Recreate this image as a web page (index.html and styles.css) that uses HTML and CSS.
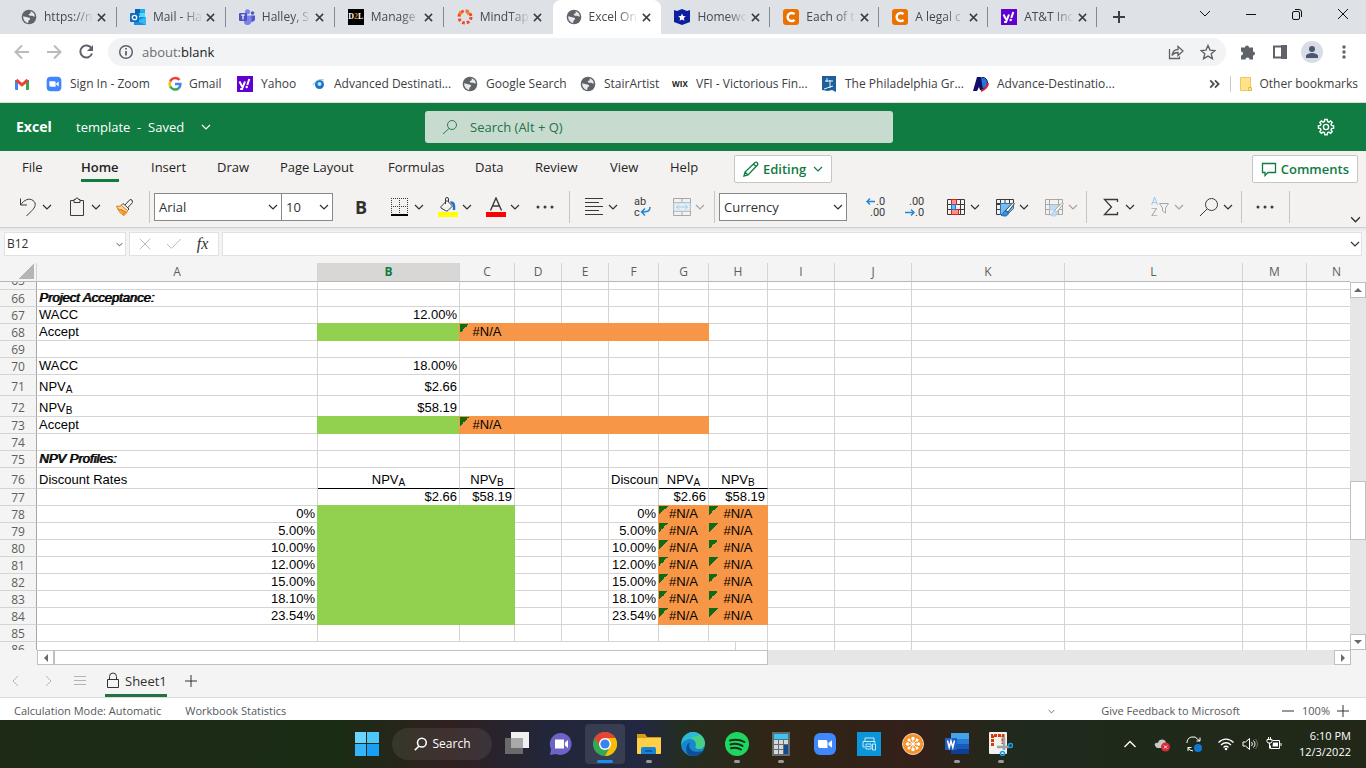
FILE: index.html
```html
<!DOCTYPE html>
<html lang="en">
<head>
<meta charset="utf-8">
<title>Excel Online</title>
<link rel="stylesheet" href="styles.css">
</head>
<body>
<svg class="defs" aria-hidden="true">
  <symbol id="chev" viewBox="0 0 10 10"><path d="M1 3l4 4 4-4" fill="none" stroke="currentColor" stroke-width="1.2"/></symbol>
  <symbol id="x" viewBox="0 0 10 10"><path d="M1 1l8 8M9 1l-8 8" fill="none" stroke="currentColor" stroke-width="1.7"/></symbol>
  <symbol id="globe" viewBox="0 0 16 16"><circle cx="8" cy="8" r="7.3" fill="#5f6368"/><path d="M9.500 2.300c2.300.5 4.200 2.500 4.300 5.200-1.200.4-1.600-.6-2.600-.7-1.300-.1-2.600.2-3.300-.8-.5-1 .4-1.400 1.400-1.500.8-.2.3-1.400.2-2.200zM2.200 7.200l4 1.100c1.200.4 2.900.3 2.900 1.600 0 1-1.600 1-1.700 2.100l-.2 1.900C4.200 13.500 1.900 10.500 2.200 7.200z" fill="#e8eaed"/></symbol>
  <symbol id="yahoo" viewBox="0 0 16 16"><path fill="#6001d2" d="M0 0h16v16H0z"/><path d="M2.500 5.500l2.600 5M8 5.500L5 13H3.200M12.300 3L10.300 9" fill="none" stroke="#fff" stroke-width="2"/><circle cx="9.700" cy="11" r="1.200" fill="#fff"/></symbol>
  <symbol id="chegg" viewBox="0 0 16 16"><rect width="16" height="16" rx="3" fill="#eb7100"/><path d="M11.500 5.200A4 4 0 1 0 11.500 10.800" fill="none" stroke="#fff" stroke-width="2.400"/></symbol>
  <symbol id="camera" viewBox="0 0 24 24"><rect x="1" y="1" width="22" height="22" rx="6" fill="#4087fc"/><path d="M5 8h7.500a2 2 0 0 1 2 2v6H7a2 2 0 0 1-2-2zM15.500 11l3.500-2.800v7.600L15.500 13z" fill="#fff"/></symbol>
</svg>

<header class="tabstrip">
  <nav class="tabs" aria-label="Browser tabs">
    <div class="tab"><svg class="i16"><use href="#globe"/></svg><span class="title">https://n</span><button class="close" aria-label="Close tab"><svg><use href="#x"/></svg></button></div>
    <div class="tab"><svg class="i16" viewBox="0 0 16 16"><path fill="#28a8ea" d="M5 0h10v7H5z"/><path fill="#0364b8" d="M5 0h5v4H5z"/><path fill="#50d9ff" d="M10 4h5v4h-5z"/><path fill="#1490df" d="M4 8h12v8H4z"/><path fill="#35b8f1" d="M16 8v8l-9-4z"/><rect y="4" width="9" height="9" rx="1" fill="#0f6cbd"/><circle cx="4.500" cy="8.500" r="2.200" fill="none" stroke="#fff" stroke-width="1.300"/></svg><span class="title">Mail - Ha</span><button class="close" aria-label="Close tab"><svg><use href="#x"/></svg></button></div>
    <div class="tab"><svg class="i16" viewBox="0 0 16 16"><circle cx="13.500" cy="4" r="1.800" fill="#5059c9"/><circle cx="8.500" cy="2.800" r="2.500" fill="#7b83eb"/><path fill="#5059c9" d="M12 6.500h4v4a3 3 0 0 1-4 2z"/><path fill="#7b83eb" d="M5 6.500h7.500V12a4 4 0 0 1-7.500 2z"/><rect y="4" width="8" height="8" rx="1" fill="#4b53bc"/><path d="M2 6h4M4 6v4.500" stroke="#fff" stroke-width="1.200"/></svg><span class="title">Halley, S</span><button class="close" aria-label="Close tab"><svg><use href="#x"/></svg></button></div>
    <div class="tab"><span class="d2l">D<b>2</b>L</span><span class="title">Manage</span><button class="close" aria-label="Close tab"><svg><use href="#x"/></svg></button></div>
    <div class="tab"><svg class="i16" viewBox="0 0 16 16" fill="none" stroke-width="3"><circle cx="8" cy="8" r="6" stroke="#e94b2b" stroke-dasharray="2.700 2"/><path d="M10 1.500l2 4M2 3l3 2" stroke="#f58220"/></svg><span class="title">MindTap</span><button class="close" aria-label="Close tab"><svg><use href="#x"/></svg></button></div>
    <div class="tab active"><svg class="i16"><use href="#globe"/></svg><span class="title">Excel On</span><button class="close" aria-label="Close tab"><svg><use href="#x"/></svg></button></div>
    <div class="tab"><svg class="i16" viewBox="0 0 16 16"><path fill="#0b1fa0" d="M0 1l3 1 5-2 5 2 3-1v12l-8 3-8-3z"/><path fill="#fff" d="M8 4.500l1.100 2.500 2.700.3-2 1.800.6 2.700L8 10.400l-2.400 1.400.6-2.700-2-1.800L6.900 7z"/></svg><span class="title">Homewo</span><button class="close" aria-label="Close tab"><svg><use href="#x"/></svg></button></div>
    <div class="tab"><svg class="i16"><use href="#chegg"/></svg><span class="title">Each of t</span><button class="close" aria-label="Close tab"><svg><use href="#x"/></svg></button></div>
    <div class="tab"><svg class="i16"><use href="#chegg"/></svg><span class="title">A legal c</span><button class="close" aria-label="Close tab"><svg><use href="#x"/></svg></button></div>
    <div class="tab"><svg class="i16"><use href="#yahoo"/></svg><span class="title">AT&amp;T Inc</span><button class="close" aria-label="Close tab"><svg><use href="#x"/></svg></button></div>
  </nav>
  <button class="newtab" aria-label="New tab"><svg viewBox="0 0 12 12"><path d="M6 0v12M0 6h12" stroke="#3c4043" stroke-width="2"/></svg></button>
  <div class="winctl">
    <button aria-label="Search tabs"><svg viewBox="0 0 12 12"><path d="M1 3l5 5 5-5"/></svg></button>
    <button aria-label="Minimize"><svg viewBox="0 0 12 12"><path d="M1 6.500h10"/></svg></button>
    <button aria-label="Restore"><svg viewBox="0 0 12 12"><rect x="1.500" y="3.500" width="7" height="8" rx="1.500"/><path d="M4 1.500h4a2.500 2.500 0 0 1 2.500 2.500v5"/></svg></button>
    <button aria-label="Close"><svg viewBox="0 0 12 12"><path d="M1 1l10 10M11 1L1 11"/></svg></button>
  </div>
</header>

<div class="toolbar">
  <button class="tb off" aria-label="Back"><svg viewBox="0 0 16 16"><path d="M15 8H2M8 1.500L1.500 8 8 14.500"/></svg></button>
  <button class="tb off" aria-label="Forward"><svg viewBox="0 0 16 16"><path d="M1 8h13M8 1.500L14.500 8 8 14.500"/></svg></button>
  <button class="tb" aria-label="Reload"><svg viewBox="0 0 16 16"><path d="M13.500 4.500A6 6 0 1 0 14 9.500" stroke-width="2"/><path d="M15 1v6H9z" fill="#5f6368" stroke="none"/></svg></button>
  <div class="omnibox">
    <svg class="i16" viewBox="0 0 16 16" fill="none" stroke="#5f6368" stroke-width="1.500"><circle cx="8" cy="8" r="6.300"/><path d="M8 7v4.500M8 4v1.600" stroke-width="1.800"/></svg>
    <span class="url" role="textbox" aria-label="Address"><i>about:</i>blank</span>
    <button class="tb" aria-label="Share"><svg viewBox="0 0 16 16"><path d="M1.500 5v9.500h10v-2M4 11.500c.5-4 2.500-6 6-6V2.500L15 7l-5 4.500V8.500c-3 0-4.500.7-6 3z" stroke-width="1.300"/></svg></button>
    <button class="tb" aria-label="Bookmark"><svg viewBox="0 0 16 16"><path d="M8 1.500l2 4.600 5 .4-3.800 3.300 1.200 4.900L8 12.100l-4.400 2.600 1.200-4.900L1 6.500l5-.4z" stroke-width="1.400"/></svg></button>
  </div>
  <button class="tb" aria-label="Extensions"><svg viewBox="0 0 16 16"><path fill="#5f6368" stroke="none" d="M1 3.500h4a2 2 0 1 1 4 0h4v4a2 2 0 1 1 0 4v4H9.500a2 2 0 1 0-4 0H1v-4a2 2 0 1 0 0-4z"/></svg></button>
  <button class="tb" aria-label="Side panel"><svg viewBox="0 0 16 16"><path d="M2 2.500h12v11H2z"/><path d="M10 2h4v12h-4z" fill="#5f6368"/></svg></button>
  <button class="tb avatar" aria-label="Profile"><svg viewBox="0 0 22 22"><circle cx="11" cy="11" r="11" fill="#dadce5" stroke="none"/><circle cx="11" cy="8" r="3" fill="#4b5670" stroke="none"/><path d="M5 17v-2c0-2 4-3 6-3s6 1 6 3v2z" fill="#4b5670" stroke="none"/></svg></button>
  <button class="tb" aria-label="Menu"><svg viewBox="0 0 16 16" class="solid"><circle cx="8" cy="3" r="1.700"/><circle cx="8" cy="8" r="1.700"/><circle cx="8" cy="13" r="1.700"/></svg></button>
</div>

<nav class="bookmarks" aria-label="Bookmarks">
  <a href="#"><svg class="i16" viewBox="0 0 16 16"><path fill="#4285f4" d="M1 4h3v10H2a1 1 0 0 1-1-1z"/><path fill="#34a853" d="M12 4h3v9a1 1 0 0 1-1 1h-2z"/><path d="M2.300 4L8 8.800 13.700 4" fill="none" stroke="#ea4335" stroke-width="3"/></svg></a>
  <a href="#"><svg class="i16"><use href="#camera"/></svg>Sign In - Zoom</a>
  <a href="#"><svg class="i16" viewBox="0 0 16 16" fill="none" stroke-width="2.500"><path d="M12.500 4A5.500 5.500 0 0 0 3.200 5.500" stroke="#ea4335"/><path d="M3.200 5.500a5.500 5.500 0 0 0 0 5" stroke="#fbbc05"/><path d="M3.200 10.500a5.500 5.500 0 0 0 8.500 1.700" stroke="#34a853"/><path d="M8 8h5.400c0 2-.7 3.300-1.700 4.200" stroke="#4285f4"/></svg>Gmail</a>
  <a href="#"><svg class="i16"><use href="#yahoo"/></svg>Yahoo</a>
  <a href="#"><svg class="i16" viewBox="0 0 16 16"><circle cx="7.500" cy="8.500" r="4.500" fill="#1a73c4"/><path d="M1 9c3-5 7-6 11-5" stroke="#7cc0ea" fill="none"/><circle cx="7.500" cy="8" r="2" fill="#bfe6fb"/></svg>Advanced Destinati...</a>
  <a href="#"><svg class="i16"><use href="#globe"/></svg>Google Search</a>
  <a href="#"><svg class="i16"><use href="#globe"/></svg>StairArtist</a>
  <a href="#"><span class="wix">WIX</span>VFI - Victorious Fin...</a>
  <a href="#"><svg class="i16" viewBox="0 0 16 16"><path fill="#1c5f9b" d="M1 0h14v16l-4-2-4 1-6-1z"/><path d="M6 2v4M4 5h8M9 4v8M3 13l9-3" stroke="#e6f2fb" fill="none"/></svg>The Philadelphia Gr...</a>
  <a href="#"><svg class="i16" viewBox="0 0 16 16"><ellipse cx="10" cy="7" rx="4.500" ry="5.500" fill="#2478d8" stroke="#101068"/><path fill="#101068" d="M4 1h4l2 13H7l-1-3-2 4H0z"/><path d="M15 7c0 4-4 7-7 8" stroke="#e02030" stroke-width="2" fill="none"/></svg>Advance-Destinatio...</a>
  <button class="more" aria-label="More bookmarks"><svg viewBox="0 0 10 10"><path d="M1 2l3 3-3 3M5 2l3 3-3 3" fill="none" stroke="#4b4f54" stroke-width="1.500"/></svg></button>
  <a href="#" class="other"><svg class="i16" viewBox="0 0 16 16"><path fill="#ffe28a" stroke="#f0c75a" d="M2.500 1.500h10v13h-10z"/><path fill="#ffe28a" stroke="#e8b93f" d="M10.500 11.500h3v3h-3z"/></svg>Other bookmarks</a>
</nav>

<div class="appbar">
  <div class="doc"><strong>Excel</strong><button>template&nbsp; -&nbsp; Saved<svg class="chev"><use href="#chev"/></svg></button></div>
  <label class="search"><svg viewBox="0 0 16 16"><circle cx="10" cy="6" r="4.500"/><path d="M7 9.500L1 15"/></svg><input type="text" aria-label="Search" placeholder="Search (Alt + Q)"></label>
  <button class="gear" aria-label="Settings"><svg viewBox="0 0 18 18"><circle cx="9" cy="9" r="2.600"/><path d="M7.800 1.500h2.400l.4 2 1.300.6 1.700-1.200 1.600 1.600-1.200 1.700.6 1.300 2 .4v2.300l-2 .4-.6 1.400 1.200 1.700-1.600 1.600-1.700-1.200-1.300.6-.4 2H7.800l-.4-2-1.300-.6-1.700 1.200-1.600-1.600L4 12l-.6-1.400-2-.4V7.900l2-.4L4 6.200 2.800 4.500l1.600-1.600 1.700 1.200 1.300-.6z"/></svg></button>
</div>

<section class="ribbon">
  <div class="rtabs">
    <button>File</button><button class="on">Home</button><button>Insert</button><button>Draw</button><button>Page Layout</button><button>Formulas</button><button>Data</button><button>Review</button><button>View</button><button>Help</button>
    <button class="pill"><svg class="i16" viewBox="0 0 16 16"><path d="M1 15l1-4L12 1.500c1.500-1 3.500 1 2.500 2.500L5 14zM10.500 3L13 5.500M2 11l3 3"/></svg>Editing<svg class="chev"><use href="#chev"/></svg></button>
    <button class="pill comments"><svg class="i16" viewBox="0 0 16 16"><path d="M1.500 2.500h13v9H7L4 14.500v-3H1.500z"/></svg>Comments</button>
  </div>
  <div class="tools">
    <button class="t2" aria-label="Undo"><svg viewBox="0 0 20 20"><path d="M2.500 1.500v6.500h6.500M2.500 8C6 3 11 .5 15 3.500s2 7-1 10L8.500 19"/></svg><svg class="chev"><use href="#chev"/></svg></button>
    <button class="t2" aria-label="Paste"><svg viewBox="0 0 20 20"><path d="M7 3.500H3.500v15h13v-15H13M7 5.500v-3h1.500a1.500 1.500 0 0 1 3 0H13v3z"/></svg><svg class="chev"><use href="#chev"/></svg></button>
    <button class="t1" aria-label="Format painter"><svg viewBox="0 0 20 20"><path d="M10 8l5-5.500 2 .5.500 2.500L12.500 11" /><path d="M8 6.500l6 5.500-2 2-6-5.500z" fill="#fff"/><path d="M6.500 8.500c-2 1-3 1-5 .5 2 5 4 8 7.500 9.500 1-1 3-2.500 3.500-5z" fill="#ffd9a0" stroke="#e07b10"/><path d="M3 12l4 1 4 2-3 2.500" fill="#f59d32" stroke="#e07b10"/></svg></button>
    <span class="sep"></span>
    <span class="sel font"><select aria-label="Font"><option>Arial</option></select><svg class="chev"><use href="#chev"/></svg></span>
    <span class="sel size"><select aria-label="Font size"><option>10</option></select><svg class="chev"><use href="#chev"/></svg></span>
    <button class="t1 bold" aria-label="Bold">B</button>
    <button class="t2 slim" aria-label="Borders"><svg viewBox="0 0 20 20"><path d="M1.500 1v16M9.500 1v16M17.500 1v16M1 1.500h17M1 9.500h17" stroke-dasharray="1 1"/><path d="M1 18h17" stroke="#000" stroke-width="2"/></svg><svg class="chev"><use href="#chev"/></svg></button>
    <button class="t2 slim" aria-label="Fill color"><svg viewBox="0 0 20 20"><path d="M7.500 7V2a1.500 1.500 0 0 1 3 0v3M3 9.500l6-6 5.500 5.500-4.500 4.500c-1 .8-2 .6-3-.2L3 11z" /><path d="M12.500 5.500c3-.5 4 2 3.500 7.500" stroke="#1a73c4" stroke-width="2.500"/><path d="M0 15h20v5H0z" fill="#ff0" stroke="none"/></svg><svg class="chev"><use href="#chev"/></svg></button>
    <button class="t2 slim" aria-label="Font color"><svg viewBox="0 0 20 20"><path d="M4.500 13.500L10 1l5.500 12.500M6.500 9h7" stroke-width="1.400"/><path d="M0 15h20v5H0z" fill="red" stroke="none"/></svg><svg class="chev"><use href="#chev"/></svg></button>
    <button class="t1 after" aria-label="More font options"><svg viewBox="0 0 20 20" class="dots"><circle cx="3" cy="10" r="1.500"/><circle cx="10" cy="10" r="1.500"/><circle cx="17" cy="10" r="1.500"/></svg></button>
    <span class="sep"></span>
    <button class="t2" aria-label="Align"><svg viewBox="0 0 20 20"><path d="M1 1.500h18M1 5.500h14M1 9.500h18M1 13.500h14M1 17.500h18"/></svg><svg class="chev"><use href="#chev"/></svg></button>
    <button class="t1" aria-label="Wrap text"><svg viewBox="0 0 20 20"><text x="2" y="8" class="glyph">ab</text><text x="2" y="19" class="glyph">c</text><path d="M18 10c0 4-2 5-8 5M13 11.500L9.500 15l3.500 3.500" stroke="#1e88d8" stroke-width="1.500"/></svg></button>
    <button class="t2 dim narrow" aria-label="Merge"><svg viewBox="0 0 20 20"><path d="M1.500 1.500h17v17h-17zM1.500 5.500h17M1.500 14.500h17M10 1.500v4M10 14.500v4"/><path d="M2 6h16v8H2z" fill="#d8edfa" stroke="#7cbde8"/><path d="M4.500 10h11M7 7.500L4.500 10 7 12.500M13 7.500l2.500 2.500-2.500 2.500" stroke="#2f93dc"/></svg><svg class="chev"><use href="#chev"/></svg></button>
    <span class="sep tight"></span>
    <span class="sel num"><select aria-label="Number format"><option>Currency</option></select><svg class="chev"><use href="#chev"/></svg></span>
    <button class="t1 first" aria-label="Increase decimal"><svg viewBox="0 0 20 20"><text x="10" y="8" class="glyph">.0</text><text x="4" y="19" class="glyph">.00</text><path d="M9 4.500H1M4 1.500l-3 3 3 3" stroke="#1e88d8" stroke-width="1.400"/></svg></button>
    <button class="t1 gap" aria-label="Decrease decimal"><svg viewBox="0 0 20 20"><text x="4" y="8" class="glyph">.00</text><text x="10" y="19" class="glyph">.0</text><path d="M0 15.500h9M6 12.500l3 3-3 3" stroke="#1e88d8" stroke-width="1.400"/></svg></button>
    <button class="t2 gap" aria-label="Conditional formatting"><svg viewBox="0 0 20 20"><path d="M1.500 2.500h17v15h-17zM1.500 7.500h17M1.500 12.500h17M5.500 2.500v15M14.500 2.500v15"/><path d="M5.500 2.500h5v5h-5zM5.500 12.500h7v5h-7z" fill="#ff8f8f" stroke="#d92020"/><path d="M5.500 7.500h4v5h-4z" fill="#6fb7ee" stroke="#1e78c8"/></svg><svg class="chev"><use href="#chev"/></svg></button>
    <button class="t2" aria-label="Format as table"><svg viewBox="0 0 20 20"><path d="M1.500 2.500h17v4M1.500 2.500v15h5M1.500 7.500h4M1.500 12.500h4M5.500 2.500v15M10 2.500v4M14.500 2.500v4M1.500 6.500h17"/><path d="M5.500 6.500h13v5l-6 6h-7z" fill="#7ebcf0" stroke="#1e78c8"/><path d="M10 14l8-8.500 1.500 1L13 15z" fill="#fff"/><path d="M12 14c-4-1-3 3-6 4 4 2 8 1 7-3z" fill="#3b93dd" stroke="#115ea3"/></svg><svg class="chev"><use href="#chev"/></svg></button>
    <button class="t2 dim" aria-label="Cell styles"><svg viewBox="0 0 20 20"><path d="M1.500 2.500h17v15h-17zM1.500 7.500h17M1.500 12.500h17M5.500 2.500v15M14.500 2.500v15"/><path d="M6 8h8v5H6z" fill="#7ebcf0" stroke="#5aa5e0"/><path d="M10 14l8-8.500 1.500 1L13 15z" fill="#fff"/><path d="M12 14c-4-1-3 3-6 4 4 2 8 1 7-3z" fill="#7ebcf0" stroke="#3b93dd"/></svg><svg class="chev"><use href="#chev"/></svg></button>
    <span class="sep flush"></span>
    <button class="t2" aria-label="AutoSum"><svg viewBox="0 0 20 20"><path d="M16.500 5V2.500h-13L10.500 10l-7 7.500h13V15" stroke-width="1.300"/></svg><svg class="chev"><use href="#chev"/></svg></button>
    <button class="t2 dim" aria-label="Sort and filter"><svg viewBox="0 0 20 20"><text x="1" y="8" class="glyph blue">A</text><text x="1" y="19" class="glyph">Z</text><path d="M9.500 6.500h9L15.500 11v5l-3-2v-3z"/></svg><svg class="chev"><use href="#chev"/></svg></button>
    <button class="t2" aria-label="Find"><svg viewBox="0 0 20 20"><circle cx="12.500" cy="7.500" r="6"/><path d="M8 12l-7 7"/></svg><svg class="chev"><use href="#chev"/></svg></button>
    <span class="sep flush"></span>
    <button class="t1" aria-label="More options"><svg viewBox="0 0 20 20" class="dots"><circle cx="3" cy="10" r="1.500"/><circle cx="10" cy="10" r="1.500"/><circle cx="17" cy="10" r="1.500"/></svg></button>
    <span class="sep"></span>
    <button class="collapse" aria-label="Ribbon options"><svg class="chev"><use href="#chev"/></svg></button>
  </div>
</section>

<div class="formula">
  <span class="namebox"><input type="text" aria-label="Name box" value="B12"><svg class="chev small"><use href="#chev"/></svg></span>
  <span class="fx">
    <button aria-label="Cancel"><svg viewBox="0 0 16 16"><path d="M2 2l12 12M14 2L2 14" stroke="#b0b0b0" fill="none"/></svg></button>
    <button aria-label="Enter"><svg viewBox="0 0 16 16"><path d="M0 8l5 5L16 2" stroke="#b0b0b0" fill="none"/></svg></button>
    <button class="fn" aria-label="Insert function">fx</button>
  </span>
  <span class="fbar"><input type="text" aria-label="Formula"><svg class="chev"><use href="#chev"/></svg></span>
</div>

<main class="gridarea">
  <div class="sheet">
    <table>
      <colgroup><col class="c0"><col class="cA"><col class="cB"><col class="cC"><col class="cD"><col class="cD"><col class="cF"><col class="cF"><col class="cH"><col class="cI"><col class="cJ"><col class="cK"><col class="cL"><col class="cM"><col></colgroup>
      <thead><tr><th class="corner"></th><th>A</th><th class="cur">B</th><th>C</th><th>D</th><th>E</th><th>F</th><th>G</th><th>H</th><th>I</th><th>J</th><th>K</th><th>L</th><th>M</th><th class="n">N</th></tr></thead>
      <tbody>
        <tr class="part top"><th><div><span>65</span></div></th><td></td><td></td><td></td><td></td><td></td><td></td><td></td><td></td><td></td><td></td><td></td><td></td><td></td><td></td></tr>
        <tr><th>66</th><td class="head">Project Acceptance:</td><td></td><td></td><td></td><td></td><td></td><td></td><td></td><td></td><td></td><td></td><td></td><td></td><td></td></tr>
        <tr><th>67</th><td>WACC</td><td class="r">12.00%</td><td></td><td></td><td></td><td></td><td></td><td></td><td></td><td></td><td></td><td></td><td></td><td></td></tr>
        <tr><th>68</th><td>Accept</td><td class="green"></td><td class="orange err">#N/A</td><td class="orange"></td><td class="orange"></td><td class="orange"></td><td class="orange"></td><td></td><td></td><td></td><td></td><td></td><td></td><td></td></tr>
        <tr><th>69</th><td></td><td></td><td></td><td></td><td></td><td></td><td></td><td></td><td></td><td></td><td></td><td></td><td></td><td></td></tr>
        <tr><th>70</th><td>WACC</td><td class="r">18.00%</td><td></td><td></td><td></td><td></td><td></td><td></td><td></td><td></td><td></td><td></td><td></td><td></td></tr>
        <tr class="tall"><th>71</th><td>NPV<sub>A</sub></td><td class="r">$2.66</td><td></td><td></td><td></td><td></td><td></td><td></td><td></td><td></td><td></td><td></td><td></td><td></td></tr>
        <tr class="tall"><th>72</th><td>NPV<sub>B</sub></td><td class="r">$58.19</td><td></td><td></td><td></td><td></td><td></td><td></td><td></td><td></td><td></td><td></td><td></td><td></td></tr>
        <tr><th>73</th><td>Accept</td><td class="green"></td><td class="orange err">#N/A</td><td class="orange"></td><td class="orange"></td><td class="orange"></td><td class="orange"></td><td></td><td></td><td></td><td></td><td></td><td></td><td></td></tr>
        <tr><th>74</th><td></td><td></td><td></td><td></td><td></td><td></td><td></td><td></td><td></td><td></td><td></td><td></td><td></td><td></td></tr>
        <tr><th>75</th><td class="head">NPV Profiles:</td><td></td><td></td><td></td><td></td><td></td><td></td><td></td><td></td><td></td><td></td><td></td><td></td><td></td></tr>
        <tr class="tall"><th>76</th><td>Discount Rates</td><td class="rule">NPV<sub>A</sub></td><td class="rule">NPV<sub>B</sub></td><td></td><td></td><td>Discoun</td><td class="rule">NPV<sub>A</sub></td><td class="rule">NPV<sub>B</sub></td><td></td><td></td><td></td><td></td><td></td><td></td></tr>
        <tr><th>77</th><td></td><td class="r">$2.66</td><td class="r">$58.19</td><td></td><td></td><td></td><td class="r">$2.66</td><td class="r">$58.19</td><td></td><td></td><td></td><td></td><td></td><td></td></tr>
        <tr><th>78</th><td class="r">0%</td><td class="green"></td><td class="green"></td><td></td><td></td><td class="r">0%</td><td class="orange err">#N/A</td><td class="orange err">#N/A</td><td></td><td></td><td></td><td></td><td></td><td></td></tr>
        <tr><th>79</th><td class="r">5.00%</td><td class="green"></td><td class="green"></td><td></td><td></td><td class="r">5.00%</td><td class="orange err">#N/A</td><td class="orange err">#N/A</td><td></td><td></td><td></td><td></td><td></td><td></td></tr>
        <tr><th>80</th><td class="r">10.00%</td><td class="green"></td><td class="green"></td><td></td><td></td><td class="r">10.00%</td><td class="orange err">#N/A</td><td class="orange err">#N/A</td><td></td><td></td><td></td><td></td><td></td><td></td></tr>
        <tr><th>81</th><td class="r">12.00%</td><td class="green"></td><td class="green"></td><td></td><td></td><td class="r">12.00%</td><td class="orange err">#N/A</td><td class="orange err">#N/A</td><td></td><td></td><td></td><td></td><td></td><td></td></tr>
        <tr><th>82</th><td class="r">15.00%</td><td class="green"></td><td class="green"></td><td></td><td></td><td class="r">15.00%</td><td class="orange err">#N/A</td><td class="orange err">#N/A</td><td></td><td></td><td></td><td></td><td></td><td></td></tr>
        <tr><th>83</th><td class="r">18.10%</td><td class="green"></td><td class="green"></td><td></td><td></td><td class="r">18.10%</td><td class="orange err">#N/A</td><td class="orange err">#N/A</td><td></td><td></td><td></td><td></td><td></td><td></td></tr>
        <tr><th>84</th><td class="r">23.54%</td><td class="green"></td><td class="green"></td><td></td><td></td><td class="r">23.54%</td><td class="orange err">#N/A</td><td class="orange err">#N/A</td><td></td><td></td><td></td><td></td><td></td><td></td></tr>
        <tr><th>85</th><td></td><td></td><td></td><td></td><td></td><td></td><td></td><td></td><td></td><td></td><td></td><td></td><td></td><td></td></tr>
        <tr class="part last"><th><div><span>86</span></div></th><td colspan="7" class="open"></td><td class="split"></td><td></td><td></td><td></td><td></td><td></td><td></td></tr>
      </tbody>
    </table>
  </div>
  <div class="vscroll">
    <button aria-label="Scroll up"><svg viewBox="0 0 8 8"><path d="M0 6l4-4 4 4z"/></svg></button>
    <span class="track"></span><span class="thumb"></span><span class="track lower"></span>
    <button aria-label="Scroll down"><svg viewBox="0 0 8 8"><path d="M0 2l4 4 4-4z"/></svg></button>
  </div>
</main>
<div class="hscroll">
  <button aria-label="Scroll left"><svg viewBox="0 0 8 8"><path d="M6 0L2 4l4 4z"/></svg></button>
  <span class="thumb"></span><span class="track"></span>
  <button aria-label="Scroll right"><svg viewBox="0 0 8 8"><path d="M2 0l4 4-4 4z"/></svg></button>
</div>

<div class="sheettabs">
  <button class="nav" aria-label="Previous sheet"><svg viewBox="0 0 12 12"><path d="M8 1L3 6l5 5"/></svg></button>
  <button class="nav" aria-label="Next sheet"><svg viewBox="0 0 12 12"><path d="M4 1l5 5-5 5"/></svg></button>
  <button class="nav" aria-label="All sheets"><svg viewBox="0 0 12 12"><path d="M0 1.500h12M0 5.500h12M0 9.500h12"/></svg></button>
  <button class="stab"><svg viewBox="0 0 14 18"><path d="M1.500 7.500h11v8h-11zM3.500 7.500V4.500a3.500 3.500 0 0 1 7 0v3"/></svg>Sheet1</button>
  <button class="nav add" aria-label="New sheet"><svg viewBox="0 0 12 12"><path d="M6 0v12M0 6h12"/></svg></button>
</div>

<footer class="status">
  <span>Calculation Mode: Automatic</span><span>Workbook Statistics</span>
  <svg class="chev small"><use href="#chev"/></svg>
  <a href="#">Give Feedback to Microsoft</a>
  <button aria-label="Zoom out"><svg viewBox="0 0 12 12"><path d="M0 6h12"/></svg></button>
  <span class="zoom">100%</span>
  <button aria-label="Zoom in"><svg viewBox="0 0 12 12"><path d="M0 6h12M6 0v12"/></svg></button>
</footer>

<div class="taskbar">
  <div class="apps">
    <button aria-label="Start"><svg viewBox="0 0 24 24"><path fill="#6ad4fa" d="M0 0h11v11H0z"/><path fill="#4cc8f8" d="M12 0h12v11H12z"/><path fill="#35b5f8" d="M0 12h11v12H0z"/><path fill="#189ff3" d="M12 12h12v12H12z"/></svg></button>
    <button class="find"><svg viewBox="0 0 16 16"><circle cx="9" cy="6.500" r="5"/><path d="M5.500 10.500L1 15"/></svg>Search</button>
    <button aria-label="Task view"><svg viewBox="0 0 24 24"><path fill="#f0f0f0" d="M6 0h18v16H6z"/><path fill="#6a6a6a" d="M0 6h18v16H0z"/><path fill="#a9a9a9" d="M6 6h12v10H6z"/></svg></button>
    <button aria-label="Chat"><svg viewBox="0 0 24 24"><path fill="#6d62c6" d="M12 1a11 11 0 1 1-5 21l-6 1 1-6A11 11 0 0 1 12 1z"/><path fill="#fff" d="M6 7.500h9v9H6zM16 10.500l3-2.500v8l-3-2.500z"/></svg></button>
    <button class="sel-app" aria-label="Chrome"><svg viewBox="0 0 24 24"><circle cx="12" cy="12" r="12" fill="#34a853"/><path fill="#fbbc05" d="M22.400 6A12 12 0 0 1 12 24l5-9-5-9z"/><path fill="#ea4335" d="M1.600 6A12 12 0 0 1 22.400 6H12L7 14z"/><circle cx="12" cy="12" r="6" fill="#fff"/><circle cx="12" cy="12" r="4.600" fill="#3b82f0"/></svg></button>
    <button class="open-app" aria-label="File Explorer"><svg viewBox="0 0 24 24"><path fill="#d99a14" d="M0 2h8l2 3h14v8H0z"/><path fill="#ffcf48" d="M0 6h24v15a1 1 0 0 1-1 1H1a1 1 0 0 1-1-1z"/><path fill="#1583d6" d="M4 22v-5a2 2 0 0 1 2-2h11a2 2 0 0 1 2 2v5z"/><path fill="#0b5fa8" d="M8 18h7v2H8z"/></svg></button>
    <button aria-label="Edge"><svg viewBox="0 0 24 24"><circle cx="12" cy="12" r="12" fill="#1787cf"/><path fill="#45cf87" d="M12 0a12 12 0 0 1 12 11c0 4-3 6-6 6-4 0-4-2-3-4 0-4-3-6-6-6-4 0-7 2-8.500 5A12 12 0 0 1 12 0z"/><path fill="#2bb8df" d="M12 0C7 0 2 4 .5 12 2 8 6 7 9 7c3-3 8-3 10-4a12 12 0 0 0-7-3z"/><path fill="#0c4f98" d="M9 10c-3 6 2 12 13 9-3 5-10 6-14 4-4-3-4-10 1-13z"/></svg></button>
    <button class="open-app" aria-label="Spotify"><svg viewBox="0 0 24 24"><circle cx="12" cy="12" r="12" fill="#1ed760"/><path d="M5 8.500c5-1.500 10-1 14.500 1.500M5.500 12.500c4-1.200 8-.8 12 1.400M6 16.300c3.500-1 7-.6 10 1.200" stroke="#14301c" fill="none" stroke-width="2" stroke-linecap="round"/></svg></button>
    <button class="open-app" aria-label="Calculator"><svg viewBox="0 0 24 24"><path fill="#676b70" d="M3 0h18v24H3z"/><path fill="#38c6f2" d="M5 2h14v5H5z"/><path fill="#d5d8db" d="M5 8h4v4H5zM10 8h4v4h-4zM15 8h4v4h-4zM5 13h4v4H5zM10 13h4v4h-4zM5 18h4v4H5zM10 18h4v4h-4z"/><path fill="#0d4c94" d="M15 13h4v9h-4z"/></svg></button>
    <button aria-label="Zoom"><svg><use href="#camera"/></svg></button>
    <button aria-label="Printer"><svg viewBox="0 0 24 24"><path fill="#0a96d8" d="M0 0h24v24H0z"/><path d="M8 9V6h9v3M8 15H6V9.500h12V11M9 12h5v5H9zM15.500 12h3v6h-3zM10 14.500h3" fill="none" stroke="#c8e9f8"/></svg></button>
    <button aria-label="Connector"><svg viewBox="0 0 24 24"><circle cx="12" cy="12" r="10.500" fill="#f7922a" stroke="#f1d7bb"/><path d="M12 5.500v13M5.500 12h13M7.500 7.500l9 9M16.500 7.500l-9 9" stroke="#fff" stroke-width="1"/><g fill="#fff"><circle cx="12" cy="6.500" r="1.800"/><circle cx="12" cy="17.500" r="1.800"/><circle cx="6.500" cy="12" r="1.800"/><circle cx="17.500" cy="12" r="1.800"/><circle cx="8" cy="8" r="1.500"/><circle cx="16" cy="8" r="1.500"/><circle cx="8" cy="16" r="1.500"/><circle cx="16" cy="16" r="1.500"/></g></svg></button>
    <button class="open-app" aria-label="Word"><svg viewBox="0 0 24 24"><path fill="#41a5ee" d="M6 1h18v6H6z"/><path fill="#2b7cd3" d="M6 7h18v5H6z"/><path fill="#185abd" d="M6 12h18v5H6z"/><path fill="#103f91" d="M6 17h18v5H6z"/><path fill="#1e5fbf" d="M0 6h12v12H0z"/><path d="M2.500 8.500l1.700 7L6 9l1.800 6.500 1.700-7" fill="none" stroke="#fff" stroke-width="1.500"/></svg></button>
    <button class="open-app" aria-label="Snipping Tool"><svg viewBox="0 0 24 24"><rect width="18" height="22" rx="1" fill="#f1f1f1"/><path d="M3.500 14V3.500H14V12" fill="none" stroke="#d83b01" stroke-width="3" stroke-dasharray="3 1"/><path d="M15 5v13M8 15h12" stroke="#a0a4a8" stroke-width="2.500"/><circle cx="13.500" cy="21.500" r="2" fill="none" stroke="#1b9de2" stroke-width="1.600"/><circle cx="21.500" cy="13.500" r="2" fill="none" stroke="#1b9de2" stroke-width="1.600"/></svg></button>
  </div>
  <div class="tray">
    <svg viewBox="0 0 16 16"><path d="M2.500 11L8 5.500 13.500 11" stroke-width="1.300"/></svg>
    <svg viewBox="0 0 16 16"><path d="M2 11c-3-3 0-5 2-4 1-5 8-4 8 0 3 0 3 4 0 5H3z" fill="#c9c9c9" stroke="none"/><circle cx="11.500" cy="11" r="4.500" fill="#d92b3a" stroke="none"/><path d="M10 9.500l3 3M13 9.500l-3 3"/></svg>
    <svg viewBox="0 0 16 16"><path d="M1 7a6 6 0 0 1 11-3.500L14 5V1.500M14 5h-3.500M2 15v-3.500h3.500M2 11.500a6 6 0 0 0 5 3.500"/><circle cx="12" cy="12" r="4" fill="#0f78d4" stroke="none"/></svg>
    <svg viewBox="0 0 16 16"><path d="M.500 6.500C5 2 11 2 15.500 6.500M3 9c3-3 7-3 10 0M5.500 11.500c1.500-1.500 3.500-1.500 5 0" stroke-width="1.300"/><circle cx="8" cy="13" r="1.300" fill="#fff" stroke="none"/></svg>
    <svg viewBox="0 0 16 16"><path d="M1 6h2.500L7.500 2.500v11L3.500 10H1zM9.500 6c1 1.500 1 2.500 0 4M11.500 4.500c2 2.500 2 4.500 0 7"/><path d="M13.500 3c2.500 3.500 2.500 6.500 0 10" stroke="#777"/></svg>
    <svg viewBox="0 0 16 16"><path d="M6.500 4.500h7v8h-9v-3M15 7v3M1 3.500h5v2L5 7H2L1 5.500zM2.500 1v2.500M4.500 1v2.500M3.500 7v5.500"/><path d="M7 6.500h5v4H6.500z" fill="#fff" stroke="none"/></svg>
    <time>6:10 PM<br>12/3/2022</time>
  </div>
</div>
</body>
</html>
```
FILE: styles.css
```css
* { box-sizing: border-box; }
body {
  margin: 0;
  height: 100vh;
  display: flex;
  flex-direction: column;
  overflow: hidden;
  background: #f4f4f4;
  color: #323130;
  font: 12px/16px "Open Sans", "Noto Sans", sans-serif;
}
button, input, select { font: inherit; color: inherit; border: 0; background: none; padding: 0; margin: 0; }
button { display: inline-flex; align-items: center; justify-content: center; white-space: nowrap; }
a { color: inherit; text-decoration: none; }
svg { flex: none; }
.defs { display: none; }
.i16 { width: 16px; height: 16px; }
.chev { width: 10px; height: 10px; }
.chev.small { width: 7px; height: 7px; }

/* browser tabs */
.tabstrip { display: flex; flex: 0 0 34px; background: #dee1e6; padding-left: 8px; }
.tabs { display: flex; flex: 0 1 1089px; min-width: 0; }
.tab { flex: 1 1 0; min-width: 0; display: flex; align-items: center; padding: 0 7px 0 13px; color: #45484c; background: linear-gradient(#85888c, #85888c) right center / 1px 20px no-repeat; }
.tab.active { background: #fff; border-radius: 8px 8px 0 0; }
.tab:has(+ .active) { background: none; }
.title { flex: 1; min-width: 0; margin-left: 7px; overflow: hidden; white-space: nowrap; -webkit-mask-image: linear-gradient(90deg, #000 60%, transparent); mask-image: linear-gradient(90deg, #000 60%, transparent); }
.close { width: 16px; height: 16px; color: #3c4043; }
.close svg { width: 9px; height: 9px; }
.d2l { width: 16px; height: 16px; background: #000; color: #fff; font: bold 8px/16px "Liberation Serif", serif; text-align: center; }
.d2l b { color: #f08020; }
.newtab { width: 44px; }
.newtab svg { width: 12px; height: 12px; }
.winctl { display: flex; margin-left: auto; height: 28px; }
.winctl button { width: 46px; }
.winctl svg { width: 12px; height: 12px; fill: none; stroke: #111; }

/* address row */
.toolbar { display: flex; align-items: center; flex: 0 0 36px; background: #fff; padding: 0 6px; }
.tb { width: 32px; height: 28px; }
.tb svg { width: 16px; height: 16px; fill: none; stroke: #5f6368; stroke-width: 2; }
.tb .solid { fill: #5f6368; stroke: none; }
.tb.off svg { stroke: #b9bbbe; }
.tb.avatar svg { width: 22px; height: 22px; }
.omnibox { flex: 1; display: flex; align-items: center; height: 28px; margin: 0 6px; padding: 0 2px 0 10px; border-radius: 14px; background: #f1f3f4; font-size: 13px; }
.url { flex: 1; margin-left: 8px; color: #202124; }
.url i { font-style: normal; color: #6b6f74; }

.bookmarks { display: grid; grid-template-columns: 32px 121px 70px 75px 150px 118px 92px 149px 152px 1fr 30px auto; align-items: center; flex: 0 0 33px; padding: 0 8px 4px 14px; background: #fff; border-bottom: 1px solid #dcdcdc; color: #3c4043; }
.bookmarks a { display: flex; align-items: center; gap: 8px; white-space: nowrap; min-width: 0; }
.bookmarks a:nth-child(5), .bookmarks a:nth-child(3) { gap: 6px; }
.bookmarks .other { gap: 5px; padding-left: 7px; border-left: 1px solid #c6c8cc; }
.more svg { width: 12px; height: 12px; }
.wix { width: 16px; font: bold 8px/16px "Open Sans", sans-serif; color: #222; }

/* app header */
.appbar { display: grid; grid-template-columns: 425px minmax(200px, 468px) 1fr; align-items: center; flex: 0 0 48px; background: #107c41; color: #fff; }
.doc { display: flex; align-items: center; padding-left: 16px; font-size: 13px; }
.doc strong { width: 60px; font-size: 14px; }
.doc button { gap: 17px; }
.search { display: flex; align-items: center; height: 32px; padding-left: 17px; gap: 12px; border-radius: 3px; background: #c7dccf; color: #1d6b41; }
.search svg { width: 16px; height: 16px; fill: none; stroke: #2e7a50; }
.search input { flex: 1; font-size: 13px; }
.search input::placeholder { color: #257148; opacity: 1; }
.gear { justify-self: end; width: 80px; height: 48px; }
.gear svg { width: 18px; height: 18px; fill: none; stroke: #fff; stroke-width: 1.4; }

/* ribbon */
.ribbon { flex: 0 0 76px; background: #f3f2f1; border-bottom: 1px solid #d2d0ce; }
.rtabs { display: grid; grid-template-columns: 59px 70px 66px 63px 108px 87px 60px 75px 60px 64px 98px 1fr; height: 36px; padding: 0 8px 0 22px; font-size: 13px; color: #252423; }
.rtabs > button { justify-content: flex-start; justify-self: start; height: 31px; padding-top: 4px; border-bottom: 3px solid transparent; }
.rtabs > .on { font-weight: 600; border-color: #107c41; }
.rtabs > .pill { height: 28px; margin-top: 4px; padding: 0 8px; gap: 4px; border: 1px solid #c8c6c4; border-radius: 2px; background: #fff; color: #107c41; font-weight: 600; }
.pill .chev { margin-left: 3px; }
.rtabs > .comments { justify-self: end; }
.pill .i16 { fill: none; stroke: #107c41; stroke-width: 1.300; }
.tools { display: flex; align-items: center; height: 40px; padding-left: 11px; color: #323130; }
.tools > button { flex: none; height: 32px; }
.tools button > svg:first-child { width: 20px; height: 20px; fill: none; stroke: #3b3a39; }
.tools .collapse { align-self: flex-end; margin: 0 5px 0 auto; height: 16px; }
.tools .collapse > svg:first-child { width: 11px; height: 11px; }
.tools > .t2 { width: 49px; gap: 4px; justify-content: flex-start; padding-left: 7px; }
.tools > .t2.slim { width: 48px; }
.tools > .t2.narrow { width: 44px; margin-left: 9px; padding-left: 5px; gap: 3px; }
.t1 { width: 32px; }
.t1.first { margin-left: 13px; }
.t1.after { margin-left: 2px; }
.gap { margin-left: 7px; }
.t1 + .t2.gap { margin-left: 8px; }
.bold { font-size: 18px; font-weight: 700; margin: 0 6px 0 12px; }
.dim { opacity: 0.4; }
.tools button > svg.dots { fill: #3b3a39; stroke: none; }
.glyph { font: 11px/11px Roboto, sans-serif; fill: #3b3a39; stroke: none; }
.glyph.blue { fill: #1e88d8; }
.sep { flex: 0 0 1px; height: 32px; margin: 0 4px 0 8px; background: #c8c6c4; }
.t1 + .sep + .t2 { margin-left: 3px; }
.sep.tight { margin: 0 4px 0 3px; }
.sep.flush { margin: 0 7px 0 0; }
.sel { display: grid; align-items: center; flex: none; height: 28px; border: 1px solid #8a8886; background: #fff; }
.sel select, .sel .chev { grid-area: 1 / 1; }
.sel select { appearance: none; width: 100%; height: 26px; padding-left: 4px; font-size: 13px; border-radius: 0; }
.sel .chev { justify-self: end; margin-right: 3px; pointer-events: none; }
.font { width: 128px; }
.size { width: 51px; border-left: 0; }
.num { width: 128px; }

/* formula bar */
.formula { display: flex; gap: 3px; flex: 0 0 35px; padding: 4px 4px 7px; background: linear-gradient(#e6e6e6, #f4f4f4 4px); }
.formula > span { display: flex; align-items: center; border: 1px solid #e1e1e1; background: #fff; }
.namebox { width: 122px; padding: 0 2px; }
.namebox input { flex: 1; min-width: 0; }
.fx { width: 90px; }
.fx button { width: 29px; height: 22px; }
.fx svg { width: 14px; height: 14px; }
.fx .fn { font: italic 16px/16px "Liberation Serif", serif; }
.fbar { flex: 1; padding-right: 1px; }
.fbar input { flex: 1; }

/* sheet */
.gridarea { display: flex; flex: 1; min-height: 0; }
.sheet { flex: 1; min-width: 0; overflow: hidden; }
table { width: 100%; table-layout: fixed; border-collapse: separate; border-spacing: 0; background: #fff; }
.c0 { width: 37px; } .cA { width: 281px; } .cB { width: 142px; } .cC { width: 55px; } .cD { width: 47px; }
.cF { width: 50px; } .cH { width: 59px; } .cI { width: 67px; } .cJ { width: 77px; } .cK { width: 153px; }
.cL { width: 178px; } .cM { width: 64px; }
th { padding: 0; background: #f4f4f4; color: #605e5c; font-weight: 400; line-height: 16px; border-right: 1px solid #d4d4d4; border-bottom: 1px solid #d4d4d4; }
thead th { height: 19px; border-bottom-color: #b8b8b8; }
th.cur { background: #d8d7d6; color: #107c41; font-weight: 700; }
th.n { padding-left: 16px; }
.corner { background: linear-gradient(135deg, transparent 50%, #b5b5b5 50%) right 2px bottom 2px / 15px 15px no-repeat #f4f4f4; }
tbody th { border-right-color: #a8a8a8; }
tbody tr:not(.part) th { padding-top: 1px; line-height: 15px; }
tbody tr.tall th { padding-top: 3px; }
tr > th:last-child, td:last-child { border-right: 0; }
td { height: 17px; padding: 0 2px; vertical-align: top; overflow: hidden; white-space: nowrap; font: 13px/15px "Liberation Sans", Arial, sans-serif; color: #000; border-right: 1px solid #d4d4d4; border-bottom: 1px solid #d4d4d4; }
.tall td { height: 21px; padding-top: 4px; }
.part th, .part td { height: 8px; }
.part div { height: 7px; overflow: hidden; display: flex; justify-content: center; align-items: flex-end; }
.last th, .last td { height: 9px; border-bottom: 0; }
.last div { height: 9px; align-items: flex-start; }
.last .open { border-right: 0; }
.split { background: linear-gradient(#d4d4d4, #d4d4d4) 26px 0 / 1px 100% no-repeat; }
.r { text-align: right; }
sub { font-size: 10px; line-height: 1px; vertical-align: -2px; }
.head { font-style: italic; text-shadow: 1px 0 0 #000; }
.rule { text-align: center; border-bottom-color: #000; }
.green { background: #92d050; border-color: #92d050; box-shadow: -1px 0 #92d050, 0 -1px #92d050, -1px -1px #92d050; }
.orange { background: #f79646; border-color: #f79646; text-align: center; box-shadow: 0 -1px #f79646, -1px 0 #f79646, -1px -1px #f79646; }
.err { background: linear-gradient(135deg, #0f6b16 50%, transparent 50%) 0 0 / 9px 9px no-repeat #f79646; }
.vscroll { width: 16px; flex: none; display: flex; flex-direction: column; padding-top: 19px; }
.vscroll button, .hscroll button { width: 16px; height: 16px; flex: none; background: #fff; border: 1px solid #c0c0c0; }
.vscroll svg, .hscroll svg { width: 8px; height: 8px; fill: #6a6a6a; }
.track { background: #e6e6e6; }
.vscroll .track { flex: 184; }
.vscroll .lower { flex: 95; }
.thumb { background: #fff; border: 1px solid #c0c0c0; }
.vscroll .thumb { flex: 0 0 59px; }
.hscroll { display: flex; flex: 0 0 15px; padding: 0 15px 0 37px; }
.hscroll button { width: 17px; height: 15px; }
.hscroll .thumb { flex: 713; }
.hscroll .track { flex: 567; }

.sheettabs { display: flex; align-items: center; flex: 0 0 33px; border-bottom: 1px solid #dcdcdc; }
.nav { width: 32px; height: 30px; }
.nav svg { width: 12px; height: 12px; fill: none; stroke: #b5b5b5; }
.nav.add svg { stroke: #333; }
.stab { align-self: stretch; margin: 0 8px 0 9px; padding: 2px 0 0 1px; gap: 5px; border-bottom: 3px solid #217346; font-size: 13px; font-weight: 500; }
.stab svg { width: 14px; height: 18px; fill: none; stroke: #333; }
.status { display: flex; align-items: center; flex: 0 0 22px; padding: 3px 17px 0 14px; background: #fff; color: #55585b; font-size: 11px; }
.status > span + span { margin-left: 24px; }
.status > .chev { margin: 2px 46px 0 auto; }
.status button { width: 12px; margin-left: 42px; }
.status button svg { width: 12px; height: 12px; stroke: #333; }
.status > .zoom { margin-left: 8px; }
.status .zoom + button { margin-left: 7px; }

/* taskbar */
.taskbar { display: grid; grid-template-columns: 1fr auto 1fr; align-items: center; flex: 0 0 48px; color: #fff; background: linear-gradient(90deg, #1c2a16 0, #1b2c15 25%, #30201f 33%, #22263a 40%, #222840 47%, #242d20 50%, #2f2616 56%, #33201a 67%, #1e2a1c 75%, #212818 100%); }
.apps { grid-column: 2; display: flex; align-items: center; padding-left: 2px; }
.apps > button { position: relative; width: 44px; height: 40px; }
.apps svg { width: 24px; height: 24px; }
.apps > .find { width: 100px; height: 32px; margin: 0 3px; gap: 5px; border-radius: 16px; background: rgba(255, 255, 255, 0.08); }
.apps .find svg { width: 14px; height: 14px; fill: none; stroke: #fff; stroke-width: 1.800; }
.apps > .sel-app { width: 40px; margin: 0 2px; border-radius: 4px; background: rgba(255, 255, 255, 0.1); }
.open-app::after, .sel-app::after { content: ""; position: absolute; bottom: 1px; width: 6px; height: 3px; border-radius: 2px; background: #9a9a9a; }
.sel-app::after { width: 16px; background: #1590f5; }
.tray { display: flex; align-items: center; justify-content: flex-end; padding-right: 15px; font-size: 11px; }
.tray svg { width: 16px; height: 16px; margin-right: 16px; fill: none; stroke: #fff; }
.tray svg:nth-of-type(n+4) { margin-right: 8px; }
.tray time { margin-left: 9px; text-align: right; white-space: nowrap; }
```
